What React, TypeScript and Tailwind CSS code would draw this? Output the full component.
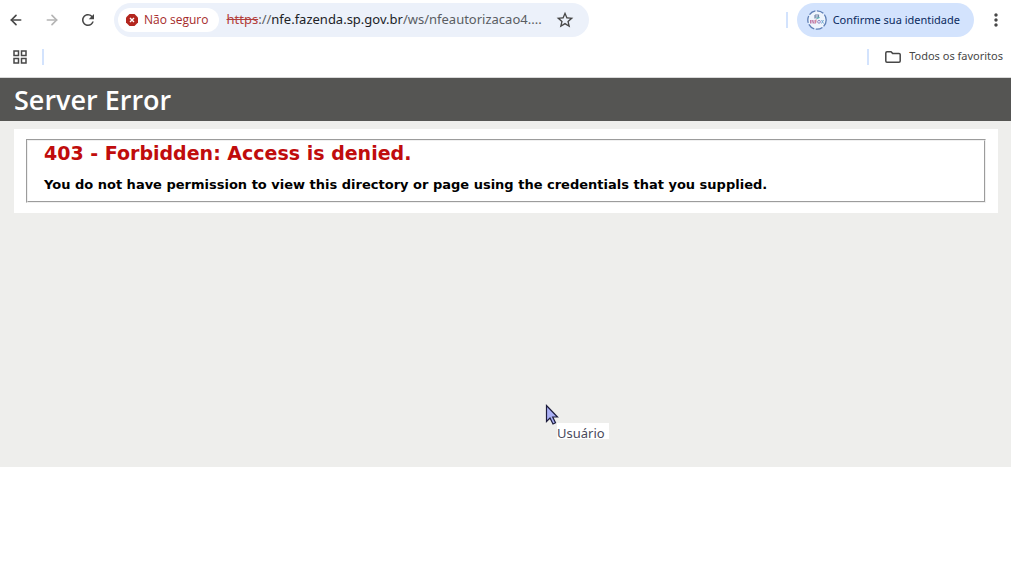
import { ArrowLeft, ArrowRight } from "lucide-react";
import {
  MdMoreVert,
  MdOutlineGridView,
  MdRefresh,
  MdStarOutline,
} from "react-icons/md";

function ProfileBadge() {
  return (
    <svg viewBox="0 0 20 20" className="w-5 h-5 shrink-0" aria-hidden="true">
      <circle cx="10" cy="10" r="9" fill="#eef4fc" />
      <circle
        cx="10"
        cy="10"
        r="9.2"
        fill="none"
        stroke="#5f7fb5"
        strokeWidth="1.3"
        strokeDasharray="7 1.6"
      />
      <path d="M8 5h3.500v2H8.500M8 5v3.500" stroke="#7286a8" strokeWidth="1.2" fill="none" />
      <path d="M9.500 8.500l3-1" stroke="#3fa7a0" strokeWidth="1.2" />
      <g opacity="0.75" fill="none" strokeWidth="1">
        <path d="M3.500 10v3.500M5 13.500V10l2 3.500V10" stroke="#b0508c" />
        <path d="M8.500 13.500V10h1.500M8.500 11.800h1.200" stroke="#c9627c" />
        <circle cx="12" cy="11.800" r="1.400" stroke="#7767b5" />
        <path d="M14.500 10l2 3.500M16.500 10l-2 3.500" stroke="#4d94c4" />
      </g>
    </svg>
  );
}

function Toolbar() {
  return (
    <div className="flex items-center h-10 pl-2 pr-[5px] text-[#474747]">
      <div className="flex items-center gap-5">
        <button type="button" aria-label="Voltar">
          <ArrowLeft className="w-4 h-4" strokeWidth={2.5} />
        </button>
        <button type="button" aria-label="Avançar" className="text-[#b4b4b4]">
          <ArrowRight className="w-4 h-4" strokeWidth={2.5} />
        </button>
        <button type="button" aria-label="Recarregar">
          <MdRefresh className="w-[18px] h-[18px] -mx-px" />
        </button>
      </div>

      <div className="flex items-center w-[475px] h-[34px] ml-[18px] pl-1 pr-3.5 rounded-full bg-[#ecf1fa]">
        <button
          type="button"
          className="flex items-center gap-1.5 h-6 pl-2 pr-2.5 shrink-0 rounded-full bg-white text-[#a52a2a] text-[12px] font-['Open_Sans',sans-serif] whitespace-nowrap"
        >
          <svg viewBox="0 0 12 12" className="w-3 h-3" aria-hidden="true">
            <path d="M3.500 0h5L12 3.500v5L8.500 12h-5L0 8.500v-5z" fill="#b3261e" />
            <path d="M4 4l4 4M8 4L4 8" stroke="#fff" strokeWidth="1.400" />
          </svg>
          Não seguro
        </button>
        <a href="#" className="ml-2 flex-1 min-w-0 text-[13px] whitespace-nowrap text-[#5a5d62]">
          <span className="text-[#b3403c] line-through">https</span>://
          <span className="text-[#202226]">nfe.fazenda.sp.gov.br</span>
          /ws/nfeautorizacao4....
        </a>
        <button type="button" aria-label="Favoritar">
          <MdStarOutline className="w-5 h-5" />
        </button>
      </div>

      <div className="flex items-center ml-auto">
        <span className="w-0.5 h-4 mr-[9px] bg-[#d3e3fd]" />
        <button
          type="button"
          className="flex items-center gap-1.5 h-[34px] pl-2.5 pr-3.5 rounded-full bg-[#d3e3fd] text-[#0a2a5e] text-[11px] whitespace-nowrap"
        >
          <ProfileBadge />
          Confirme sua identidade
        </button>
        <button type="button" aria-label="Mais opções" className="ml-3">
          <MdMoreVert className="w-5 h-5" />
        </button>
      </div>
    </div>
  );
}

function BookmarksBar() {
  return (
    <div className="flex items-center h-[38px] pl-[11px] pr-2 pb-1 border-b border-[#d9d9d9] text-[#474747]">
      <button type="button" aria-label="Aplicativos">
        <MdOutlineGridView className="w-[18px] h-[18px]" />
      </button>
      <span className="w-0.5 h-4 ml-[13px] bg-[#d3e3fd]" />
      <span className="w-0.5 h-4 ml-auto mr-4 bg-[#d3e3fd]" />
      <button
        type="button"
        className="flex items-center gap-2 text-[11px] whitespace-nowrap"
      >
        <svg viewBox="0 0 16 12" className="w-4 h-3" fill="none" aria-hidden="true">
          <path
            d="M.8 10V2Q.8.800 2 .800h4l1.600 1.600H14q1.200 0 1.200 1.200V10q0 1.200-1.200 1.200H2Q.8 11.200.8 10z"
            stroke="currentColor"
            strokeWidth="1.500"
          />
        </svg>
        Todos os favoritos
      </button>
    </div>
  );
}

function Pointer() {
  return (
    <div className="absolute left-[545px] top-[326px]">
      <svg viewBox="0 0 14 21" className="w-3.5 h-[21px]" aria-hidden="true">
        <path
          d="M1.500 1.500v16l3.500-3.500 3 6 2.500-1.200-2.800-5.800h4.800z"
          fill="#aab0f5"
          stroke="#1c1c3c"
          strokeWidth="1.200"
        />
      </svg>
      <span className="absolute left-3 top-[19px] h-4 pr-1 bg-white text-[13px] leading-5 text-[#4a4a5c]">
        Usuário
      </span>
    </div>
  );
}

export default function App() {
  return (
    <div className="min-h-screen bg-white font-['Noto_Sans',sans-serif]">
      <header>
        <Toolbar />
        <BookmarksBar />
      </header>

      <main className="relative pb-[254px] bg-[#eeeeec] font-['DejaVu_Sans',sans-serif]">
        <h1 className="h-[43px] px-3.5 bg-[#555553] text-white text-[27px] leading-[43px] font-semibold font-['Open_Sans',sans-serif]">
          Server Error
        </h1>
        <div className="mt-2 ml-3.5 mr-[13px] px-3 py-2.5 bg-white">
          <fieldset className="px-4 pb-2 border-2 border-[#f0f0f0] [border-style:groove]">
            <h2 className="text-[19px] leading-6 font-bold text-[#c00c0c]">
              403 - Forbidden: Access is denied.
            </h2>
            <h3 className="mt-3 text-[13px] leading-4 font-bold text-black">
              You do not have permission to view this directory or page using the credentials that
              you supplied.
            </h3>
          </fieldset>
        </div>
        <div className="font-['Noto_Sans',sans-serif]">
          <Pointer />
        </div>
      </main>
    </div>
  );
}
